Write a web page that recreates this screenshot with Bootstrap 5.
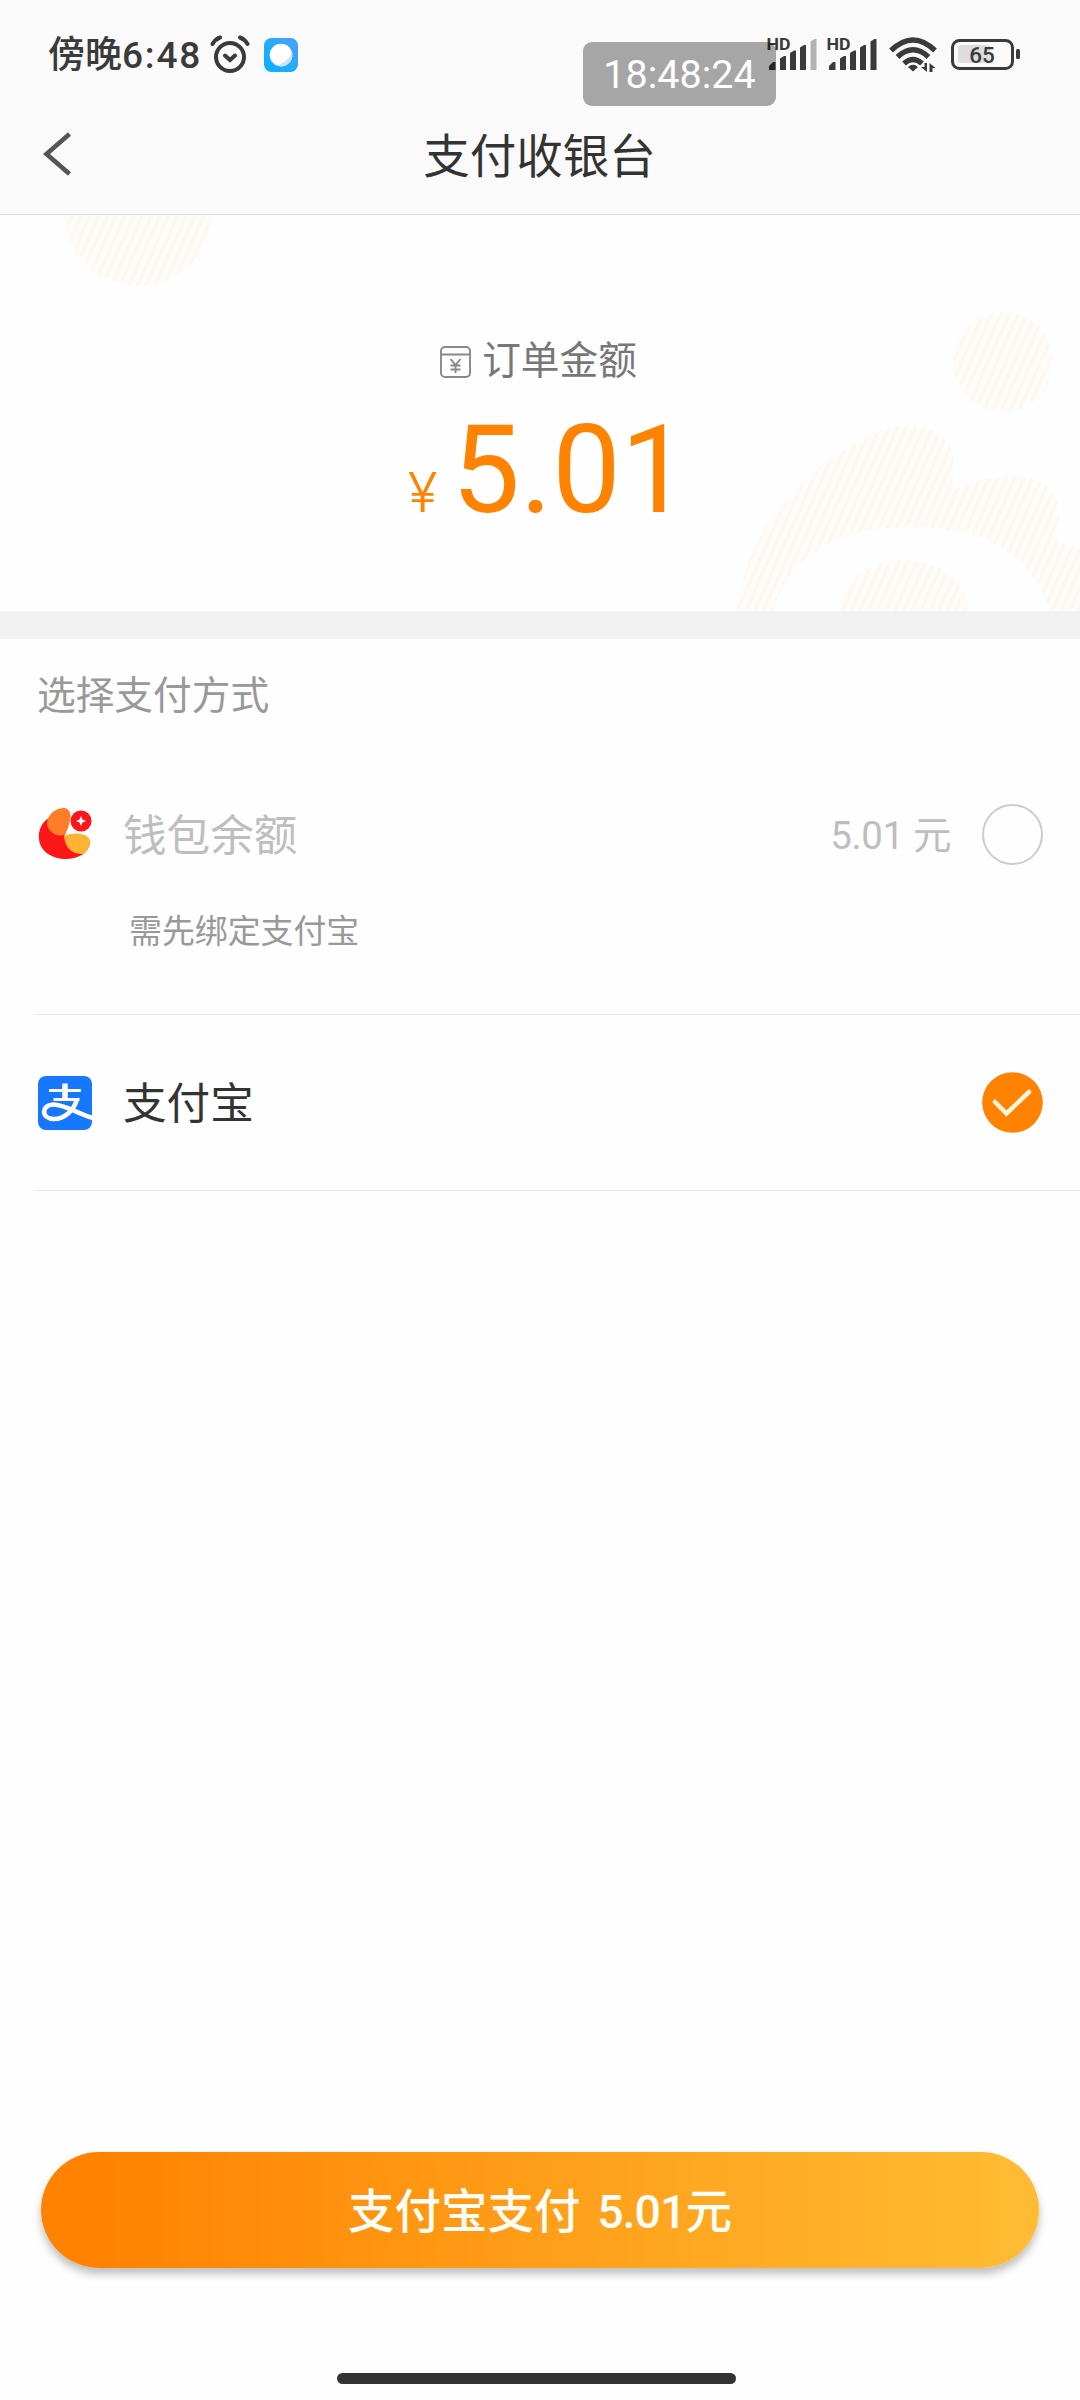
<!DOCTYPE html>
<html lang="zh-CN">
<head>
<meta charset="utf-8">
<meta name="viewport" content="width=device-width, initial-scale=1">
<title>支付收银台</title>
<link href="https://cdn.jsdelivr.net/npm/bootstrap@5.3.0/dist/css/bootstrap.min.css" rel="stylesheet">
<style>
body{font-family:Roboto,"Noto Sans CJK SC",sans-serif;background:#fefefe;color:#333;line-height:1}
svg{display:block;flex:none}
.screen{width:1080px;height:2400px;overflow:hidden}
.topbar{background:#fafafa;height:215px;border-bottom:1px solid #ddd}
.status{height:110px;padding:0 60px 0 48px}
.clock{font-size:37px;font-weight:500;color:#3a3a3a;white-space:nowrap;padding-top:1px}
.clock-num{letter-spacing:1.8px}
.app-mark{margin-left:14px}
.stamp{left:583px;top:42px;width:193px;height:64px;border-radius:9px;background:rgba(0,0,0,.335);color:#fff;font-size:39.5px;padding-top:2px}
.titlebar{height:104px}
.page-title{font-size:46.5px;font-weight:400;padding-top:20px;margin-left:-1px}
.back-btn{left:42px;top:22px}
.amount-box{height:396px}
.deco{left:0;top:0}
.order-label{font-size:38.7px;color:#777;padding-top:127px;margin-right:3px}
.order-icon{margin:4px 11px 0 0}
.sum{color:#ff8200;height:90px;margin-top:29px;margin-right:-17px}
.sum-yen{font-family:Inter,Roboto,sans-serif;font-size:55px;font-weight:300;margin-right:14px}
.sum-num{font-size:122px;letter-spacing:0}
.band{height:28px;background:#f1f1f2}
.sec-title{font-size:38.7px;color:#999;padding:34px 0 0 37px;height:101px}
.pay-item{margin-left:35px;padding:0 37px 0 3px;border-bottom:1px solid #e5e5e5}
.pay-name{font-size:43.6px;margin-left:31px;padding-top:5px}
.wallet{height:275px;color:#bebebe}
.wallet-row{height:60px;margin-top:64px}
.wallet-sum{font-size:38.5px;letter-spacing:-.4px;margin-right:31px;padding-top:5px}
.note{font-size:32.9px;color:#999;margin:52px 0 0 91px}
.alipay{height:176px}
.ring{width:61px;height:61px;border:2px solid #ccc;border-radius:50%}
.pay-btn{margin:0 41px;height:116px;border:0;border-radius:58px;background:linear-gradient(90deg,#ff8200 5%,#ffbb33 97%);color:#fffdf5;font-size:46.5px;font-weight:500;box-shadow:0 6px 9px rgba(0,0,0,.25);padding-top:6px;word-spacing:5px}
.pay-btn-num{letter-spacing:-1px}
.homebar{width:399px;height:11px;border-radius:6px;background:#333;margin:105px 0 16px 337px}
</style>
</head>
<body>
<main class="screen d-flex flex-column">
<header class="topbar position-relative">
 <div class="status d-flex align-items-center">
  <span class="clock">傍晚<span class="clock-num">6:48</span></span>
  <svg class="ms-2" width="40" height="40" viewBox="0 0 40 40" fill="none" stroke="#3a3a3a" stroke-width="4" stroke-linecap="round"><circle cx="20" cy="22" r="14"/><path d="M2.500 9Q5.500 4 10 2.500M37.500 9Q34.500 4 30 2.500M15 20.500L20 25L25 20.500"/></svg>
  <svg class="app-mark" width="34" height="34" viewBox="0 0 34 34"><defs><linearGradient id="ap" x1="1" y1="0" x2="0" y2="1"><stop offset="0" stop-color="#4d9fff"/><stop offset="1" stop-color="#00b4fb"/></linearGradient></defs><rect width="34" height="34" rx="7.500" fill="url(#ap)"/><circle cx="17" cy="17" r="11.300" fill="#fff"/><path d="M28 14Q25 23 13 27.500A11.300 11.300 0 0 0 28 14Z" fill="#cfe3fb"/></svg>
  <svg class="ms-auto" width="260" height="40" viewBox="760 35 260 40" fill="#3a3a3a">
   <g id="sg"><text x="766.500" y="50" font-size="16" font-weight="700" textLength="24" lengthAdjust="spacingAndGlyphs">HD</text>
   <path d="M769 70v-4l4-4h2.500v8zM780 70V58.500l4-2.500h2v14zM790 70V53l4-2.500h2V70zM800 70V47.500l4-2.500h2V70z"/></g>
   <path d="M810.500 70V41.500l4-2.500h2V70z" fill="#b2b2b2"/>
   <use href="#sg" x="60"/><path d="M870.500 70V41.500l4-2.500h2V70z"/>
   <g fill="none" stroke="#3a3a3a" stroke-width="5.400"><path d="M891 50.500Q913 29.500 935 50.500M897.500 57Q913 42.500 928.500 57M904 63.500Q913 55.500 922 63.500"/></g>
   <path d="M908 67Q913 62.500 918 67L913 71.500zM921 67h3.500v-4h2.500v9zM929.500 72v-9l6 5h-3v4z"/>
   <rect x="952.500" y="40.500" width="60" height="28" rx="7" fill="none" stroke="#3a3a3a" stroke-width="3"/><rect x="958" y="45" width="32" height="18" rx="3" fill="#ddd"/><rect x="1016" y="49" width="4" height="10" rx="1.500"/>
   <text x="982" y="62.500" font-size="22.500" font-weight="500" text-anchor="middle">65</text>
  </svg>
 </div>
 <div class="stamp position-absolute d-flex align-items-center justify-content-center">18:48:24</div>
 <div class="titlebar position-relative d-flex justify-content-center">
  <svg class="back-btn position-absolute" width="30" height="44" viewBox="0 0 30 44" fill="none" stroke="#555" stroke-width="4.600"><path d="M27.500 2L4.500 22L27.500 42"/></svg>
  <h1 class="page-title mb-0">支付收银台</h1>
 </div>
</header>
<section class="amount-box position-relative text-center">
 <svg class="deco position-absolute" width="1080" height="396" viewBox="0 215 1080 396">
  <defs><pattern id="st" width="8" height="10" patternUnits="userSpaceOnUse" patternTransform="rotate(24)"><rect width="8" height="10" fill="#fffdf9"/><rect width="3.500" height="10" fill="#fef8f2"/></pattern></defs>
  <g fill="url(#st)"><circle cx="138" cy="212" r="74"/><circle cx="1003" cy="362" r="50"/>
  <path d="M736 611C746 535 795 475 863 439C900 418 947 421 953 455C955 476 950 486 957 489C990 473 1045 466 1058 502C1062 522 1053 538 1060 544L1080 548V611H1050C1030 550 980 527 910 527C840 527 790 553 773 611Z"/><path d="M840 611A64 51 0 0 1 968 611Z"/></g>
 </svg>
 <div class="order-label position-relative d-flex justify-content-center">
  <svg class="order-icon" width="31" height="32" viewBox="0 0 31 32" fill="none" stroke="#888" stroke-width="1.900"><rect x="1" y="1" width="29" height="30" rx="4"/><path d="M1 8.500h29M10.500 13l5 6l5-6M15.500 19v8M10.500 19.500h10M10.500 23.500h10"/></svg><span>订单金额</span>
 </div>
 <div class="sum position-relative d-flex justify-content-center align-items-baseline"><span class="sum-yen">¥</span><span class="sum-num">5.01</span></div>
</section>
<div class="band"></div>
<h2 class="sec-title m-0 fw-normal">选择支付方式</h2>
<div class="pay-item wallet">
 <div class="wallet-row d-flex align-items-center">
  <svg width="54" height="54" viewBox="0 0 54 54"><path d="M14 9C4 14 0 23 1 32C2 45 15 52 28 52C39 52 50 47 52 36C52 28 36 26 26 29C30 23 33 11 29 4Q24-1 14 9Z" fill="#fd1618"/><path d="M27 1C17 0 9 9 9 16C9 24 17 30 26 28C31 20 37 4 27 1Z" fill="#ff7d26"/><path d="M26 29C34 25 53 25 52 36C51 42 47 47 44 47C34 47 27 41 26 29Z" fill="#ffb334"/><circle cx="43" cy="14" r="10.500" fill="#fd1618"/><path d="M43 9l1.500 3.500L48 14l-3.500 1.500L43 19l-1.500-3.500L38 14l3.500-1.500z" fill="#fff"/></svg>
  <span class="pay-name">钱包余额</span><span class="wallet-sum ms-auto">5.01 元</span><span class="ring"></span>
 </div>
 <div class="note">需先绑定支付宝</div>
</div>
<div class="pay-item alipay d-flex align-items-center">
 <svg width="54" height="54" viewBox="0 0 54 54"><rect width="54" height="54" rx="8" fill="#1677ff"/><g fill="none" stroke="#fff"><path d="M11 14.500h32" stroke-width="3"/><path d="M27 7.500v16" stroke-width="5.500"/><path d="M15.500 23.500h26" stroke-width="3"/><path d="M39 23C36 35 26 43 16 43C3 43 3 29 15 28.500C26 28 38 37 55 42" stroke-width="4.600"/></g></svg>
 <span class="pay-name">支付宝</span>
 <svg class="ms-auto" width="61" height="61" viewBox="0 0 61 61"><circle cx="30.500" cy="30.500" r="30.300" fill="#ff8200"/><path d="M13 30L24.500 41.500L47 20" fill="none" stroke="#fff4dc" stroke-width="4.500" stroke-linecap="round"/></svg>
</div>
<button class="pay-btn mt-auto" type="button">支付宝支付 <span class="pay-btn-num">5.01</span>元</button>
<div class="homebar flex-shrink-0"></div>
</main>
<script src="https://cdn.jsdelivr.net/npm/bootstrap@5.3.0/dist/js/bootstrap.bundle.min.js"></script>
</body>
</html>
